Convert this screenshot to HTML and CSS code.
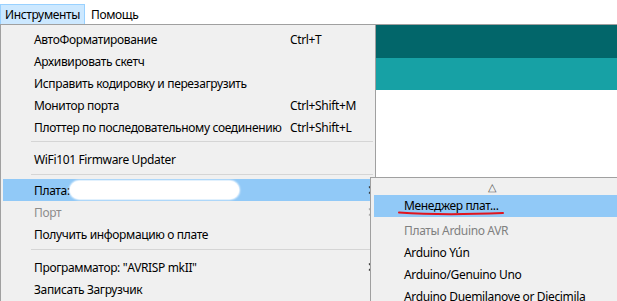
FILE: index.html
```html
<!DOCTYPE html>
<html lang="ru">
<head>
<meta charset="utf-8">
<title>Инструменты</title>
<link rel="stylesheet" href="styles.css">
</head>
<body>
<div class="menubar">
  <div class="mb-item active">Инструменты</div>
  <div class="mb-item">Помощь</div>
</div>
<div class="workarea">
  <div class="menu">
    <div class="item"><span class="label">АвтоФорматирование</span><span class="key">Ctrl+T</span></div>
    <div class="item"><span class="label">Архивировать скетч</span></div>
    <div class="item"><span class="label">Исправить кодировку и перезагрузить</span></div>
    <div class="item"><span class="label">Монитор порта</span><span class="key">Ctrl+Shift+M</span></div>
    <div class="item"><span class="label">Плоттер по последовательному соединению</span><span class="key">Ctrl+Shift+L</span></div>
    <div class="sep s1"></div>
    <div class="item"><span class="label">WiFi101 Firmware Updater</span></div>
    <div class="sep s2"></div>
    <div class="item hl"><span class="label">Плата:</span><span class="blur"></span><svg class="chev" width="5" height="8" viewBox="0 0 5 8"><path d="M1 0.5 L4 4 L1 7.5" fill="none" stroke="#333" stroke-width="1.2"/></svg></div>
    <div class="item dis"><span class="label">Порт</span><svg class="chev" width="5" height="8" viewBox="0 0 5 8"><path d="M1 0.5 L4 4 L1 7.5" fill="none" stroke="#aaa" stroke-width="1.2"/></svg></div>
    <div class="item"><span class="label">Получить информацию о плате</span></div>
    <div class="sep s3"></div>
    <div class="item"><span class="label">Программатор: "AVRISP mkII"</span><svg class="chev" width="5" height="8" viewBox="0 0 5 8"><path d="M1 0.5 L4 4 L1 7.5" fill="none" stroke="#333" stroke-width="1.2"/></svg></div>
    <div class="item"><span class="label">Записать Загрузчик</span></div>
  </div>
  <div class="editor">
    <div class="band dark"></div>
    <div class="band light"></div>
  </div>
</div>
<div class="submenu">
  <div class="up">△</div>
  <div class="sitem shl">Менеджер плат...</div>
  <div class="sitem shead">Платы Arduino AVR</div>
  <div class="sitem">Arduino Yún</div>
  <div class="sitem">Arduino/Genuino Uno</div>
  <div class="sitem">Arduino Duemilanove or Diecimila</div>
</div>
<svg class="redline" width="110" height="8" viewBox="0 0 110 8"><path d="M2 3.5 C 30 5.5, 70 5.5, 106 4" fill="none" stroke="#e0141e" stroke-width="2" stroke-linecap="round"/></svg>
</body>
</html>
```
FILE: styles.css
```css
html, body {
  margin: 0;
  padding: 0;
}
body {
  width: 617px;
  height: 301px;
  overflow: hidden;
  background: #ffffff;
  font-family: "Noto Sans", "Open Sans", sans-serif;
  font-size: 12px;
  letter-spacing: -0.35px;
  color: #000;
  position: relative;
}
.menubar {
  height: 24px;
  border-bottom: 1px solid #a0a0a0;
  display: flex;
  align-items: flex-end;
  background: #fff;
}
.mb-item {
  height: 20px;
  line-height: 19px;
  padding: 0 4px 0 5px;
  box-sizing: border-box;
  border: 1px solid transparent;
  border-bottom: none;
}
.mb-item.active {
  background: #cce8ff;
  border-color: #99d1ff;
  padding-left: 4px;
  width: 85px;
}
.workarea {
  display: flex;
  height: 276px;
}
.menu {
  width: 376px;
  box-sizing: border-box;
  background: #f0f0f0;
  border-left: 1px solid #a0a0a0;
  border-right: 1px solid #a0a0a0;
  padding: 3px 2px 0 2px;
  display: flex;
  flex-direction: column;
}
.item {
  height: 22px;
  display: flex;
  align-items: center;
  padding-left: 31px;
  position: relative;
  flex: none;
}
.item .label {
  width: 256px;
  white-space: nowrap;
  flex: none;
}
.item .key {
  white-space: nowrap;
}
.item.hl {
  background: #91c9f7;
}
.item.dis {
  color: #8c8c8c;
}
.chev {
  position: absolute;
  right: 0;
  top: 7px;
}
.blur {
  position: absolute;
  left: 67px;
  top: 2px;
  width: 169px;
  height: 18px;
  border-radius: 9px;
  background: #ffffff;
  box-shadow: 0 0 2px 1px #ffffff;
}
.sep {
  flex: none;
  margin-left: 28px;
  border-top: 1px solid #d5d5d5;
  box-sizing: border-box;
}
.sep.s1 { height: 7px; margin-top: 3px; }
.sep.s2 { height: 5px; margin-top: 4px; }
.sep.s3 { height: 7px; margin-top: 4px; }
.editor {
  flex: 1;
  display: flex;
  flex-direction: column;
}
.band.dark {
  height: 33px;
  background: #02666a;
}
.band.light {
  height: 32px;
  background: #17a1a5;
}
.submenu {
  position: absolute;
  left: 370px;
  top: 177px;
  width: 260px;
  height: 130px;
  box-sizing: border-box;
  background: #f0f0f0;
  border: 1px solid #a0a0a0;
  padding: 0 0 0 3px;
}
.up {
  height: 17px;
  line-height: 17px;
  padding-left: 114px;
  font-size: 11px;
  color: #555;
}
.sitem {
  height: 22px;
  line-height: 22px;
  padding-left: 30px;
  white-space: nowrap;
}
.sitem.shl {
  background: #91c9f7;
}
.sitem.shead {
  height: 25px;
  line-height: 28px;
  color: #808080;
}
.redline {
  position: absolute;
  left: 397px;
  top: 209px;
}
```
